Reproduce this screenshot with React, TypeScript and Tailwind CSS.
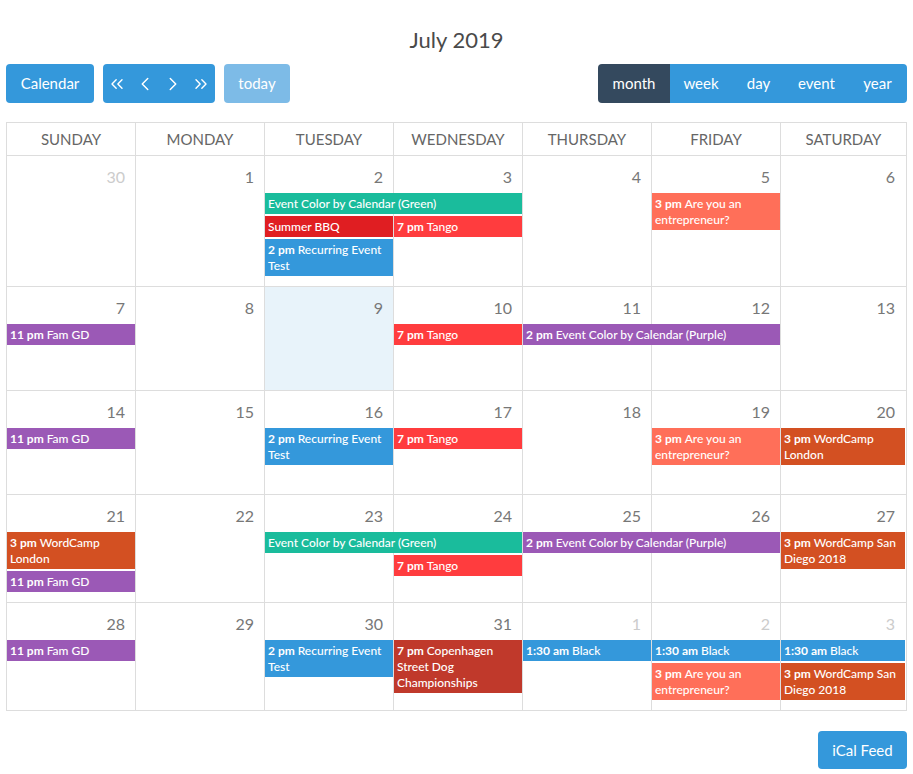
import React from "react";
import { ChevronLeft, ChevronRight, ChevronsLeft, ChevronsRight } from "lucide-react";

type Ev = { time?: string; title: string; color: string };
type Lane = { col: number; span: number; ev: Ev };
type Day = { n: number; other?: boolean; today?: boolean };
type Week = { days: Day[]; lanes: Lane[]; stacks: Record<number, Ev[]> };

const GREEN = "bg-[#1abc9c]";
const BBQ = "bg-[#e01e22]";
const TANGO = "bg-[#ff3c3e]";
const BLUE = "bg-[#3498db]";
const PURPLE = "bg-[#9b59b6]";
const SALMON = "bg-[#ff6f59]";
const ORANGE = "bg-[#d35022]";
const BRICK = "bg-[#c0392b]";

// six fixed day columns, the last one takes what is left
const COLS = "grid-cols-[repeat(6,129px)_1fr]";

const colStart = ["col-start-1", "col-start-2", "col-start-3", "col-start-4", "col-start-5", "col-start-6", "col-start-7"];
const colSpan = ["col-span-1", "col-span-1", "col-span-2", "col-span-3", "col-span-4", "col-span-5", "col-span-6", "col-span-7"];

const famGD: Ev = { time: "11 pm", title: "Fam GD", color: PURPLE };
const tango: Ev = { time: "7 pm", title: "Tango", color: TANGO };
const recurring: Ev = { time: "2 pm", title: "Recurring Event Test", color: BLUE };
const entrepreneur: Ev = { time: "3 pm", title: "Are you an entrepreneur?", color: SALMON };
const wcLondon: Ev = { time: "3 pm", title: "WordCamp London", color: ORANGE };
const wcSanDiego: Ev = { time: "3 pm", title: "WordCamp San Diego 2018", color: ORANGE };
const black: Ev = { time: "1:30 am", title: "Black", color: BLUE };
const greenCal: Ev = { title: "Event Color by Calendar (Green)", color: GREEN };
const purpleCal: Ev = { time: "2 pm", title: "Event Color by Calendar (Purple)", color: PURPLE };

const weeks: Week[] = [
  {
    days: [{ n: 30, other: true }, { n: 1 }, { n: 2 }, { n: 3 }, { n: 4 }, { n: 5 }, { n: 6 }],
    lanes: [{ col: 2, span: 2, ev: greenCal }],
    stacks: {
      2: [{ title: "Summer BBQ", color: BBQ }, recurring],
      3: [tango],
      5: [entrepreneur],
    },
  },
  {
    days: [{ n: 7 }, { n: 8 }, { n: 9, today: true }, { n: 10 }, { n: 11 }, { n: 12 }, { n: 13 }],
    lanes: [{ col: 4, span: 2, ev: purpleCal }],
    stacks: { 0: [famGD], 3: [tango] },
  },
  {
    days: [{ n: 14 }, { n: 15 }, { n: 16 }, { n: 17 }, { n: 18 }, { n: 19 }, { n: 20 }],
    lanes: [],
    stacks: { 0: [famGD], 2: [recurring], 3: [tango], 5: [entrepreneur], 6: [wcLondon] },
  },
  {
    days: [{ n: 21 }, { n: 22 }, { n: 23 }, { n: 24 }, { n: 25 }, { n: 26 }, { n: 27 }],
    lanes: [
      { col: 2, span: 2, ev: greenCal },
      { col: 4, span: 2, ev: purpleCal },
    ],
    stacks: { 0: [wcLondon, famGD], 3: [tango], 6: [wcSanDiego] },
  },
  {
    days: [{ n: 28 }, { n: 29 }, { n: 30 }, { n: 31 }, { n: 1, other: true }, { n: 2, other: true }, { n: 3, other: true }],
    lanes: [],
    stacks: {
      0: [famGD],
      2: [recurring],
      3: [{ time: "7 pm", title: "Copenhagen Street Dog Championships", color: BRICK }],
      4: [black],
      5: [black, entrepreneur],
      6: [black, wcSanDiego],
    },
  },
];

const DAYS = ["Sunday", "Monday", "Tuesday", "Wednesday", "Thursday", "Friday", "Saturday"];

function EventBar({ ev }: { ev: Ev }) {
  return (
    <div className={`${ev.color} mr-[1px] mb-[2px] px-[3px] pt-[3px] pb-[2px] text-[12px] leading-4 text-white`}>
      {ev.time && <span className="font-bold">{ev.time} </span>}
      <span className="font-medium">{ev.title}</span>
    </div>
  );
}

function WeekRow({ week }: { week: Week }) {
  const hasLane = week.lanes.length > 0;
  const covered = new Set<number>();
  week.lanes.forEach((l) => {
    for (let i = l.col; i < l.col + l.span; i++) covered.add(i);
  });

  return (
    <div className="relative min-h-[104px] border-b border-[#ddd] last:border-b-0">
      {/* day backgrounds and column rules */}
      <div className={`absolute inset-0 grid ${COLS}`}>
        {week.days.map((d, i) => (
          <div
            key={i}
            className={`${i < 6 ? "border-r border-[#ddd]" : ""} ${d.today ? "bg-[#e8f3fa]" : ""}`}
          />
        ))}
      </div>

      <div className={`relative grid ${COLS} pb-[8px] ${hasLane ? "grid-rows-[37px_23px_auto]" : "grid-rows-[37px_auto]"}`}>
        {week.days.map((d, i) => (
          <div
            key={`n${i}`}
            className={`${colStart[i]} row-start-1 pt-[11px] pr-[11px] text-right text-[16px] leading-5 ${
              d.other ? "text-[#ccc]" : "text-[#777]"
            }`}
          >
            {d.n}
          </div>
        ))}

        {week.lanes.map((l, i) => (
          <div key={`l${i}`} className={`${colStart[l.col]} ${colSpan[l.span]} row-start-2`}>
            <EventBar ev={l.ev} />
          </div>
        ))}

        {Object.entries(week.stacks).map(([k, evs]) => {
          const c = Number(k);
          const rowCls = covered.has(c) ? "row-start-3" : hasLane ? "row-start-2 row-span-2" : "row-start-2";
          return (
            <div key={`s${k}`} className={`${colStart[c]} ${rowCls} flex flex-col`}>
              {evs.map((ev, j) => (
                <EventBar key={j} ev={ev} />
              ))}
            </div>
          );
        })}
      </div>
    </div>
  );
}

export default function App() {
  return (
    <div className="min-h-[774px] bg-white px-[6px] font-['Lato',sans-serif]">
      <h2 className="pt-[25px] text-center text-[22px] leading-[30px] text-[#4a4a4a]">July 2019</h2>

      <div className="mt-[9px] flex items-center justify-between">
        <div className="flex items-center gap-[9px]">
          <button className="h-[39px] w-[88px] rounded bg-[#3498db] text-[15px] text-white">Calendar</button>
          <div className="flex h-[39px] overflow-hidden rounded bg-[#3498db] text-white">
            <span className="flex w-[28px] items-center justify-center">
              <ChevronsLeft size={20} strokeWidth={1.7} />
            </span>
            <span className="flex w-[28px] items-center justify-center">
              <ChevronLeft size={22} strokeWidth={1.6} />
            </span>
            <span className="flex w-[28px] items-center justify-center">
              <ChevronRight size={22} strokeWidth={1.6} />
            </span>
            <span className="flex w-[28px] items-center justify-center">
              <ChevronsRight size={20} strokeWidth={1.7} />
            </span>
          </div>
          <button className="h-[39px] w-[66px] rounded bg-[#7dbbe7] text-[15px] text-white">today</button>
        </div>

        <div className="flex h-[39px] overflow-hidden rounded text-[15px] text-white">
          <button className="w-[72px] bg-[#34495e]">month</button>
          <button className="w-[62px] bg-[#3498db]">week</button>
          <button className="w-[53px] bg-[#3498db]">day</button>
          <button className="w-[63px] bg-[#3498db]">event</button>
          <button className="w-[59px] bg-[#3498db]">year</button>
        </div>
      </div>

      <div className="mt-[19px] border border-[#ddd]">
        <div className={`grid ${COLS} border-b border-[#ddd]`}>
          {DAYS.map((d, i) => (
            <div
              key={d}
              className={`flex h-[32px] items-center justify-center text-[15px] uppercase text-[#666] ${
                i < 6 ? "border-r border-[#ddd]" : ""
              }`}
            >
              {d}
            </div>
          ))}
        </div>
        {weeks.map((w, i) => (
          <WeekRow key={i} week={w} />
        ))}
      </div>

      <div className="mt-[20px] flex justify-end">
        <button className="h-[38px] w-[89px] rounded bg-[#3498db] text-[15px] text-white">iCal Feed</button>
      </div>
    </div>
  );
}
